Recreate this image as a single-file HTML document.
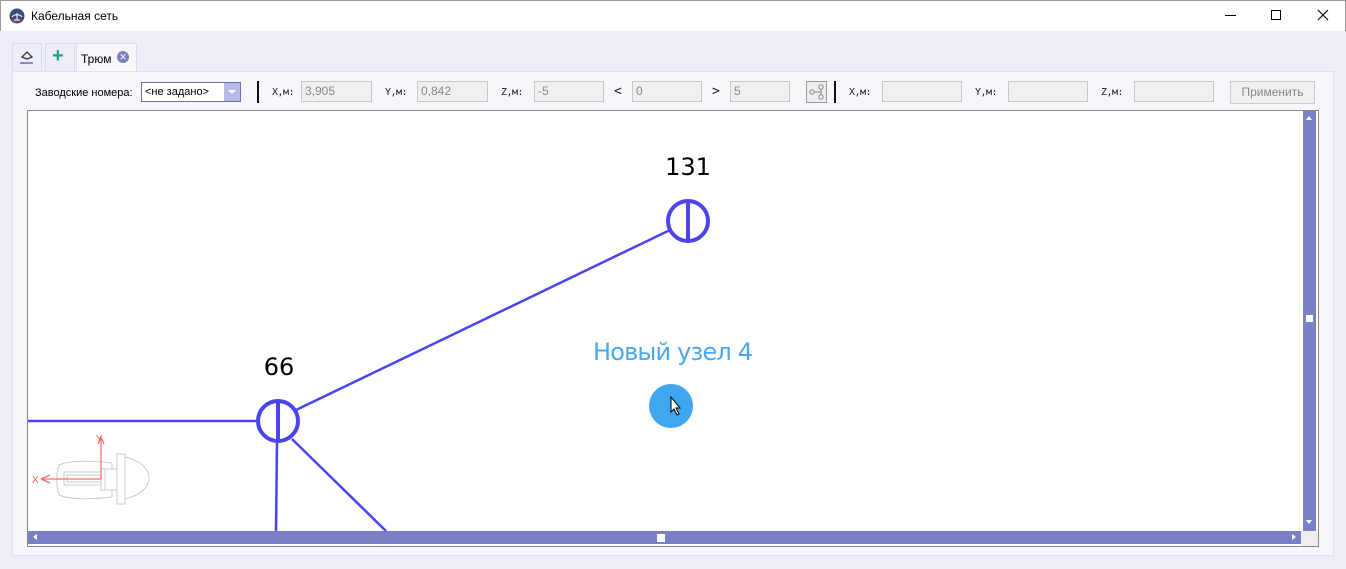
<!DOCTYPE html>
<html><head><meta charset="utf-8"><style>
*{margin:0;padding:0;box-sizing:border-box}
body{width:1346px;height:569px;background:#eeeef8;font-family:"Liberation Sans",sans-serif;position:relative;overflow:hidden;font-size:12px}
.abs{position:absolute}
.title{left:0;top:0;width:1346px;height:31px;background:#fff;border:1px solid #999;border-bottom:none}
.tab{top:43px;height:29px;border:1px solid #dcdcf0;background:#eeeef8}
.panel{left:12px;top:71px;width:1322px;height:485px;background:#f6f6fb;border:1px solid #e0e0f2}
.lbl{top:87px;font-family:"DejaVu Sans Mono",monospace;font-size:10px;color:#222;letter-spacing:-0.5px}
.inp{top:81px;height:21px;background:#f0f0f0;border:1px solid #c8c8c8;color:#888;font-size:12px;padding:3px 3px;line-height:13px}
</style></head><body>
<div class="abs title"></div>
<svg class="abs" style="left:9px;top:8px" width="16" height="16" viewBox="0 0 16 16"><circle cx="8" cy="8" r="7.5" fill="#3a4d7a"/><path d="M3 9c2-3 8-3 10 0" stroke="#fff" fill="none"/><path d="M8 5v8M5 12h6" stroke="#fff"/><path d="M4 13h8" stroke="#d33"/></svg>
<div class="abs" style="left:31px;top:9px;font-size:12px;color:#000">Кабельная сеть</div>
<div class="abs" style="left:1225px;top:15px;width:11px;height:1px;background:#000"></div>
<div class="abs" style="left:1271px;top:10px;width:10px;height:10px;border:1px solid #000"></div>
<svg class="abs" style="left:1317px;top:9px" width="12" height="12"><path d="M1 1L11 11M11 1L1 11" stroke="#000" stroke-width="1.1"/></svg>

<div class="abs tab" style="left:12px;width:30px"></div>
<svg class="abs" style="left:19px;top:49px" width="16" height="16"><path d="M3 8l5-5 5 5-5 2z" fill="none" stroke="#333" stroke-width="1.3"/><rect x="1" y="13" width="13" height="2" fill="#8a8ad0"/></svg>
<div class="abs tab" style="left:45px;width:30px"></div>
<div class="abs" style="left:52px;top:45px;font-size:20px;color:#1aa090;font-weight:bold">+</div>
<div class="abs tab" style="left:76px;width:61px;background:#f6f6fb;height:30px;border-bottom:none"></div>
<div class="abs" style="left:81px;top:52px;font-size:12px">Трюм</div>
<div class="abs" style="left:117px;top:51px;width:12px;height:12px;border-radius:50%;background:#8080c0;color:#fff;font-size:9px;line-height:12px;text-align:center">✕</div>

<div class="abs panel"></div>
<div class="abs" style="left:35px;top:87px;font-size:11px">Заводские номера:</div>
<div class="abs" style="left:141px;top:82px;width:100px;height:20px;border:1px solid #7070c0;background:#fff;font-size:11px;padding:3px 3px">&lt;не задано&gt;</div>
<div class="abs" style="left:224px;top:83px;width:16px;height:18px;background:#b8b8e8"></div>
<div class="abs" style="left:228px;top:90px;border-left:4px solid transparent;border-right:4px solid transparent;border-top:4px solid #fff"></div>
<div class="abs" style="left:257px;top:81px;width:2px;height:22px;background:#111"></div>
<div class="abs lbl" style="left:272px">X,м:</div><div class="abs inp" style="left:301px;width:71px">3,905</div>
<div class="abs lbl" style="left:385px">Y,м:</div><div class="abs inp" style="left:417px;width:71px">0,842</div>
<div class="abs lbl" style="left:501px">Z,м:</div><div class="abs inp" style="left:534px;width:70px">-5</div>
<div class="abs lbl" style="left:614px;font-size:13px;top:84px">&lt;</div><div class="abs inp" style="left:632px;width:70px">0</div>
<div class="abs lbl" style="left:712px;font-size:13px;top:84px">&gt;</div><div class="abs inp" style="left:730px;width:60px">5</div>
<div class="abs" style="left:806px;top:81px;width:21px;height:22px;border:1px solid #999;background:#eee"></div>
<svg class="abs" style="left:808px;top:83px" width="18" height="18"><circle cx="4" cy="9" r="2.2" fill="none" stroke="#888"/><circle cx="13" cy="4" r="2.2" fill="none" stroke="#888"/><circle cx="13" cy="14" r="2.2" fill="none" stroke="#888"/><path d="M6 9h7M13 6v6" stroke="#888"/></svg>
<div class="abs" style="left:834px;top:81px;width:2px;height:22px;background:#111"></div>
<div class="abs lbl" style="left:849px">X,м:</div><div class="abs inp" style="left:882px;width:80px"></div>
<div class="abs lbl" style="left:975px">Y,м:</div><div class="abs inp" style="left:1008px;width:80px"></div>
<div class="abs lbl" style="left:1101px">Z,м:</div><div class="abs inp" style="left:1134px;width:80px"></div>
<div class="abs" style="left:1230px;top:81px;width:85px;height:23px;border:1px solid #ccc;background:#f0f0f0;color:#888;font-size:12px;text-align:center;line-height:21px">Применить</div>

<div class="abs" style="left:27px;top:110px;width:1292px;height:437px;background:#fff;border:1px solid #888"></div>
<div class="abs" style="left:1303px;top:111px;width:13px;height:420px;background:#7b80c4"></div>
<div class="abs" style="left:1306px;top:315px;width:7px;height:7px;background:#fff"></div>
<div class="abs" style="left:1306px;top:116px;border-left:3.5px solid transparent;border-right:3.5px solid transparent;border-bottom:4px solid #fff"></div>
<div class="abs" style="left:1306px;top:520px;border-left:3.5px solid transparent;border-right:3.5px solid transparent;border-top:4px solid #fff"></div>
<div class="abs" style="left:28px;top:531px;width:1273px;height:13px;background:#7b80c4"></div>
<div class="abs" style="left:1301px;top:531px;width:17px;height:15px;background:#eee"></div>
<div class="abs" style="left:657px;top:534px;width:8px;height:8px;background:#fff"></div>
<div class="abs" style="left:33px;top:534px;border-top:3.5px solid transparent;border-bottom:3.5px solid transparent;border-right:4px solid #fff"></div>
<div class="abs" style="left:1292px;top:534px;border-top:3.5px solid transparent;border-bottom:3.5px solid transparent;border-left:4px solid #fff"></div>

<svg class="abs" style="left:28px;top:111px" width="1275" height="420">
<g stroke="#4a44ee" stroke-width="2.5" fill="none">
<line x1="0" y1="310" x2="230" y2="310"/>
<line x1="268" y1="299" x2="642" y2="119"/>
<line x1="249" y1="330" x2="248" y2="420"/>
<line x1="264" y1="328" x2="358" y2="420"/>
<circle cx="660" cy="110" r="20" stroke-width="4"/><line x1="660" y1="91" x2="660" y2="129" stroke-width="4"/>
<circle cx="250" cy="310" r="20" stroke-width="4"/><line x1="250" y1="291" x2="250" y2="329" stroke-width="4"/>
</g>
<text x="660" y="64" font-size="24" text-anchor="middle" font-family="DejaVu Sans,sans-serif">131</text>
<text x="251" y="264" font-size="24" text-anchor="middle" font-family="DejaVu Sans,sans-serif">66</text>
<text x="645" y="249" font-size="24" text-anchor="middle" fill="#4aa8f0" font-family="DejaVu Sans,sans-serif" textLength="160">Новый узел 4</text>
<circle cx="643" cy="295" r="22" fill="#3fa6f0"/>
<path d="M643 286v15l3-3 3 6 2-1-3-6h4z" fill="#fff" stroke="#000" stroke-width="1"/>
<g stroke="#ccc" fill="none" stroke-width="1">
<path d="M84 352C60 349 40 350 31 354c-3 8-3 22 0 30 9 4 29 5 53 2"/>
<path d="M84 352v6h-11v21h11v7"/>
<path d="M77 358v21"/>
<rect x="36" y="361" width="37" height="13"/><rect x="39" y="364" width="34" height="7"/>
<path d="M84 358h5M84 379h5"/>
<rect x="89" y="343" width="8" height="50"/>
<path d="M97 346c16 4 24 12 24 21s-8 17-24 21"/>
</g>
<g stroke="#f87070" fill="none" stroke-width="1.3"><path d="M73 368H13M73 368V326M13 368l9-4M13 368l9 4M73 326l-3 7M73 326l3 7"/></g>
<text x="68" y="331" fill="#f06060" font-size="10">Y</text><text x="4" y="372" fill="#f06060" font-size="10">X</text>
</svg>
</body></html>
